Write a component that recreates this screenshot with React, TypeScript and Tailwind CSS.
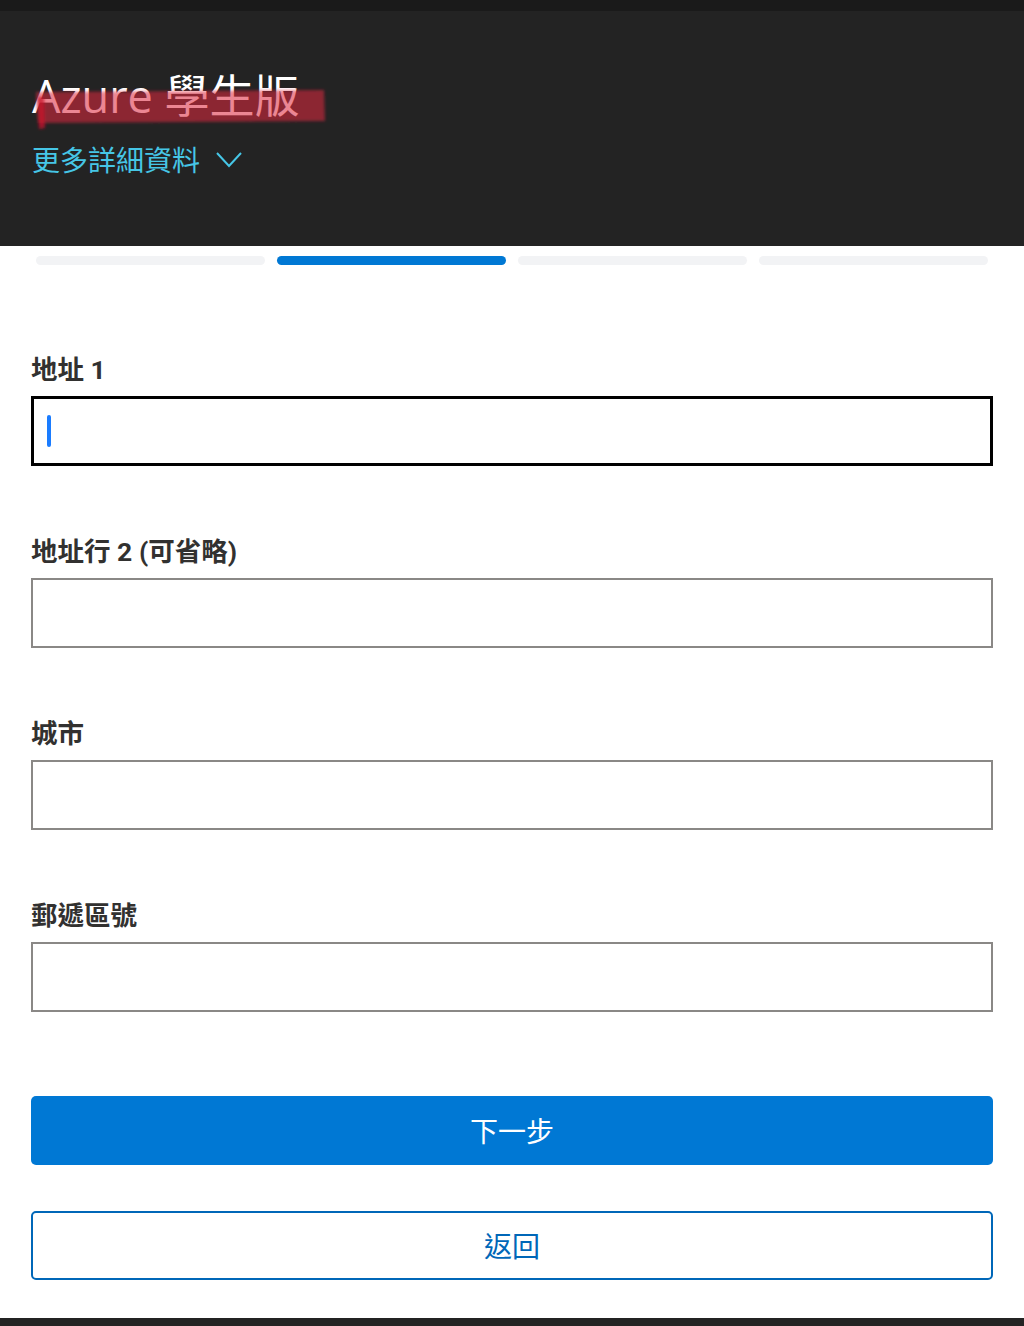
import React from "react";

const fields = [
  { key: "address1", label: "地址 1", focused: true },
  { key: "address2", label: "地址行 2 (可省略)" },
  { key: "city", label: "城市" },
  { key: "postal", label: "郵遞區號" },
];

const steps = [false, true, false, false];

const cjk = { fontFamily: '"Roboto", "Noto Sans CJK TC", sans-serif' };
const ui = { fontFamily: '"Open Sans", "Noto Sans CJK TC", sans-serif' };

export default function App() {
  return (
    <div className="flex min-h-[1326px] w-[1024px] flex-col bg-white" style={ui}>
      <div className="h-[11px] bg-[#1a1a1a]" />

      {/* header */}
      <header className="flex h-[235px] flex-col bg-[#232323] px-[32px] pt-[58px]">
        <div className="relative w-fit">
          <h1 className="text-[45px] leading-[53px] text-white" style={ui}>
            Azure 學生版
          </h1>
          {/* redaction scribble over the title */}
          <svg
            className="pointer-events-none absolute left-[-4px] top-[14px]"
            width="310"
            height="52"
            viewBox="0 0 310 52"
          >
            <defs>
              <filter id="blur" x="-10%" y="-50%" width="120%" height="200%">
                <feGaussianBlur stdDeviation="1.8" />
              </filter>
            </defs>
            <g filter="url(#blur)">
              <path
                d="M8 9 L296 7 L297 38 L10 40 Z"
                fill="rgba(222,38,60,0.56)"
              />
              <path d="M9 14 L16 14 L17 45 L11 46 Z" fill="rgba(200,20,45,0.75)" />
            </g>
          </svg>
        </div>
        <button className="mt-[20px] flex items-center gap-[16px] text-[28px] leading-[36px] text-[#46c6e6]">
          <span>更多詳細資料</span>
          <svg width="26" height="18" viewBox="0 0 26 18" fill="none">
            <path d="M1 2 L13 15 L25 2" stroke="#46c6e6" strokeWidth="2" />
          </svg>
        </button>
      </header>

      {/* progress */}
      <div className="grid grid-cols-4 gap-[12px] px-[36px] pt-[10px]">
        {steps.map((active, i) =>
          active ? (
            <div key={i} className="h-[9px] rounded-full bg-[#0078d4]" />
          ) : (
            <div key={i} className="h-[9px] rounded-full bg-[#f2f3f5]" />
          )
        )}
      </div>

      {/* form */}
      <form className="flex flex-col gap-[69px] px-[31px] pt-[88px]">
        {fields.map((f) => (
          <div key={f.key} className="flex flex-col gap-[9px]">
            <label className="text-[26.5px] font-bold leading-[34px] text-[#323130]" style={cjk}>
              {f.label}
            </label>
            {f.focused ? (
              <div className="flex h-[70px] items-center border-[3px] border-black px-[13px]">
                <span className="h-[32px] w-[4px] rounded-full bg-[#1a7cff]" />
              </div>
            ) : (
              <div className="h-[70px] border-2 border-[#8a8886]" />
            )}
          </div>
        ))}
      </form>

      {/* actions */}
      <div className="flex flex-col gap-[46px] px-[31px] pt-[84px]">
        <button
          className="h-[69px] rounded-[5px] bg-[#0078d4] text-[28px] text-white"
          style={ui}
        >
          下一步
        </button>
        <button
          className="h-[69px] rounded-[5px] border-2 border-[#0067b8] bg-white text-[28px] text-[#0067b8]"
          style={ui}
        >
          返回
        </button>
      </div>

      <div className="flex-1" />
      <div className="h-[8px] bg-[#232323]" />
    </div>
  );
}
